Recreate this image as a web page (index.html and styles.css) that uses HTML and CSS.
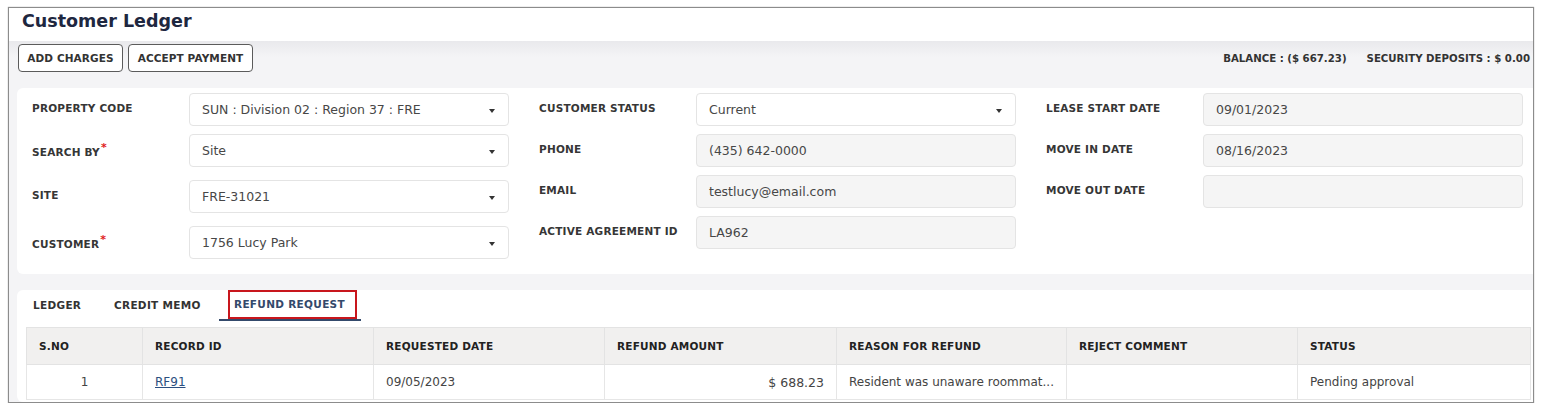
FILE: index.html
```html
<!DOCTYPE html>
<html lang="en">
<head>
  <meta charset="UTF-8">
  <title>Customer Ledger</title>
  <link rel="stylesheet" href="styles.css">
</head>
<body>
  <div class="frame">
    <div class="page-header">
      <h1>Customer Ledger</h1>
    </div>

    <div class="page-body">
      <div class="toolbar">
        <div class="actions">
          <button class="btn">ADD CHARGES</button>
          <button class="btn">ACCEPT PAYMENT</button>
        </div>
        <div class="summary">
          <span>BALANCE : ($ 667.23)</span>
          <span>SECURITY DEPOSITS : $ 0.00</span>
        </div>
      </div>

      <div class="card form-card">
        <div class="form-col">
          <div class="form-row">
            <label>PROPERTY CODE</label>
            <div class="field select">SUN : Division 02 : Region 37 : FRE</div>
          </div>
          <div class="form-row">
            <label>SEARCH BY<sup>*</sup></label>
            <div class="field select">Site</div>
          </div>
          <div class="form-row spaced">
            <label>SITE</label>
            <div class="field select">FRE-31021</div>
          </div>
          <div class="form-row spaced">
            <label>CUSTOMER<sup>*</sup></label>
            <div class="field select">1756 Lucy Park</div>
          </div>
        </div>

        <div class="form-col">
          <div class="form-row">
            <label>CUSTOMER STATUS</label>
            <div class="field select">Current</div>
          </div>
          <div class="form-row">
            <label>PHONE</label>
            <div class="field readonly">(435) 642-0000</div>
          </div>
          <div class="form-row">
            <label>EMAIL</label>
            <div class="field readonly">testlucy@email.com</div>
          </div>
          <div class="form-row">
            <label>ACTIVE AGREEMENT ID</label>
            <div class="field readonly">LA962</div>
          </div>
        </div>

        <div class="form-col">
          <div class="form-row">
            <label>LEASE START DATE</label>
            <div class="field readonly">09/01/2023</div>
          </div>
          <div class="form-row">
            <label>MOVE IN DATE</label>
            <div class="field readonly">08/16/2023</div>
          </div>
          <div class="form-row">
            <label>MOVE OUT DATE</label>
            <div class="field readonly"></div>
          </div>
        </div>
      </div>

      <div class="card tabs-card">
        <div class="tabs">
          <div class="tab tab-ledger">LEDGER</div>
          <div class="tab tab-memo">CREDIT MEMO</div>
          <div class="tab tab-refund active"><span class="highlight">REFUND REQUEST</span></div>
        </div>

        <table class="grid">
          <colgroup>
            <col style="width:116px">
            <col style="width:231px">
            <col style="width:231px">
            <col style="width:232px">
            <col style="width:230px">
            <col style="width:231px">
            <col style="width:233px">
          </colgroup>
          <thead>
            <tr>
              <th>S.NO</th>
              <th>RECORD ID</th>
              <th>REQUESTED DATE</th>
              <th>REFUND AMOUNT</th>
              <th>REASON FOR REFUND</th>
              <th>REJECT COMMENT</th>
              <th>STATUS</th>
            </tr>
          </thead>
          <tbody>
            <tr>
              <td class="center">1</td>
              <td><a href="#">RF91</a></td>
              <td>09/05/2023</td>
              <td class="right">$ 688.23</td>
              <td>Resident was unaware roommat...</td>
              <td></td>
              <td>Pending approval</td>
            </tr>
          </tbody>
        </table>
      </div>
    </div>
  </div>
</body>
</html>
```

FILE: styles.css
```css
body {
  margin: 0;
  background: #fff;
  font-family: "DejaVu Sans", "Open Sans", sans-serif;
  color: #333;
}

.frame {
  margin: 7px 0 0 8px;
  width: 1524px;
  height: 394px;
  border: 1px solid #8c8c8c;
  box-shadow: 0 0 1px #999;
  overflow: hidden;
  display: flex;
  flex-direction: column;
}

.page-header {
  height: 37px;
  box-sizing: border-box;
  background: #fff;
  padding: 1px 0 0 13px;
}
.page-header h1 {
  margin: 0;
  font-size: 17.5px;
  line-height: 24px;
  font-weight: bold;
  color: #1e2740;
}

.page-body {
  flex: 1;
  background: linear-gradient(#e9e9ec, #f4f4f6 16px);
  padding-left: 8px;
}

.toolbar {
  display: flex;
  justify-content: space-between;
  align-items: center;
  padding: 3px 3px 0 1px;
  height: 28px;
}
.actions {
  display: flex;
  gap: 5px;
}
.btn {
  height: 28px;
  padding: 0;
  border: 1px solid #5b5b5b;
  border-radius: 4px;
  background: #fff;
  font-family: inherit;
  font-size: 10.5px;
  font-weight: 600;
  letter-spacing: 0.1px;
  color: #333;
}
.btn:first-child {
  width: 105px;
}
.btn:last-child {
  width: 125px;
}
.summary {
  display: flex;
  gap: 20px;
  font-size: 10.2px;
  font-weight: 600;
  color: #333;
}

.card {
  background: #fff;
  border-radius: 6px 0 0 6px;
}

.form-card {
  margin-top: 16px;
  height: 186px;
  box-sizing: border-box;
  padding: 5px 9px 0 15px;
  display: flex;
  gap: 30px;
}
.form-col {
  width: 477px;
}
.form-row {
  display: flex;
  align-items: center;
  margin-bottom: 8px;
}
.form-row.spaced {
  margin-top: 13px;
}
.form-row label {
  width: 157px;
  flex-shrink: 0;
  font-size: 10.5px;
  font-weight: 600;
  letter-spacing: 0.2px;
  color: #363636;
  margin-top: -3px;
}
.form-row label sup {
  color: #e0201c;
  font-size: 11px;
  margin-left: 1px;
}

.field {
  position: relative;
  width: 320px;
  height: 33px;
  box-sizing: border-box;
  border: 1px solid #e4e4e4;
  border-radius: 4px;
  padding-left: 12px;
  display: flex;
  align-items: center;
  font-size: 12.5px;
  font-weight: 500;
  color: #474747;
}
.field.readonly {
  background: #f5f5f5;
}
.field.select::after {
  content: "";
  position: absolute;
  right: 13px;
  top: 15px;
  border-left: 3.5px solid transparent;
  border-right: 3.5px solid transparent;
  border-top: 4px solid #333;
}

.tabs-card {
  margin-top: 16px;
  padding: 0 3px 0 1px;
  height: 112px;
}
.tabs {
  display: flex;
  gap: 2px;
  height: 31px;
}
.tab {
  box-sizing: border-box;
  padding-left: 15px;
  font-size: 10.5px;
  font-weight: 600;
  letter-spacing: 0.3px;
  color: #333;
  display: flex;
  align-items: center;
  border-bottom: 2px solid transparent;
}
.tab-ledger {
  width: 79px;
}
.tab-memo {
  width: 118px;
}
.tab-refund {
  width: 142px;
}
.tab.active {
  padding-left: 9px;
  border-bottom-color: #33496b;
  color: #33496b;
  margin-top: -1px;
}
.highlight {
  border: 2px solid #c8161d;
  width: 129px;
  height: 29px;
  box-sizing: border-box;
  padding-left: 4px;
  display: flex;
  align-items: center;
  white-space: nowrap;
}

.grid {
  margin: 6px 0 0 8px;
  border-collapse: collapse;
  table-layout: fixed;
  width: 1504px;
  font-size: 12px;
}
.grid th {
  height: 36px;
  background: #f1f0ef;
  text-align: left;
  padding: 0 12px;
  font-size: 10.5px;
  font-weight: bold;
  letter-spacing: 0.2px;
  color: #222;
  border: 1px solid #e3e3e3;
}
.grid td {
  height: 34px;
  padding: 0 12px;
  border: 1px solid #e6e6e6;
  color: #444;
  font-weight: 500;
  white-space: nowrap;
}
.grid td.center {
  text-align: center;
}
.grid td.right {
  text-align: right;
  font-size: 12.5px;
}
.grid a {
  color: #2c4f80;
}
```
